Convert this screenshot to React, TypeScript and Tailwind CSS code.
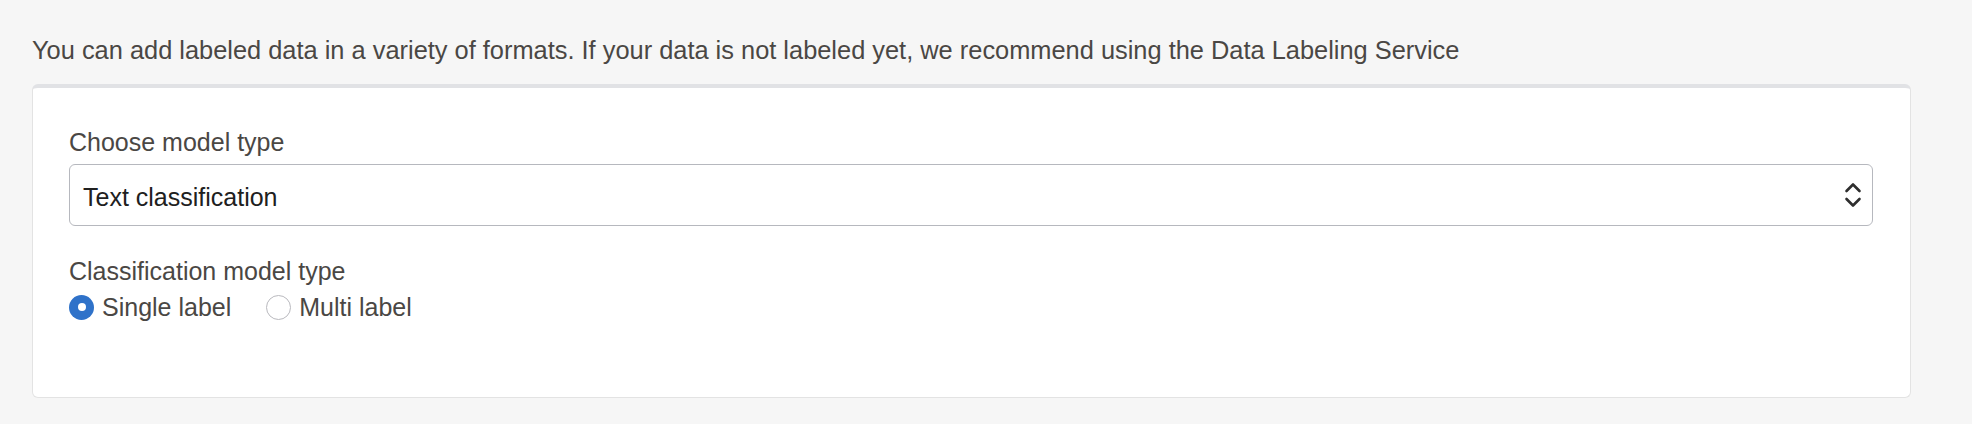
import React from "react";

function Chevrons() {
  return (
    <svg width="18" height="30" viewBox="0 0 18 30" fill="none" className="block">
      <path d="M2.5 11 L9 4.5 L15.5 11" stroke="#2e2e2e" strokeWidth="2.6" strokeLinecap="round" strokeLinejoin="round" />
      <path d="M2.5 19 L9 25.5 L15.5 19" stroke="#2e2e2e" strokeWidth="2.6" strokeLinecap="round" strokeLinejoin="round" />
    </svg>
  );
}

export default function App() {
  return (
    <div
      className="w-[1972px] h-[424px] bg-[#f6f6f6] pl-[32px] pr-[61px] pt-[35px] text-[25px] text-[#4a4744]"
      style={{ fontFamily: '"Liberation Sans", Arial, Helvetica, sans-serif' }}
    >
      <div className="leading-[30px] whitespace-nowrap text-[25.4px]">
        You can add labeled data in a variety of formats. If your data is not labeled yet, we recommend using the Data Labeling Service
      </div>
      <div className="mt-[19px] h-[314px] bg-white border border-[#e3e3e3] border-t-[4px] border-t-[#e1e2e5] rounded-[6px] pl-[36px] pr-[37px] pt-[39px]">
        <div className="leading-[30px]">Choose model type</div>
        <div className="mt-[7px] h-[62px] border border-[#b6b8be] rounded-[6px] flex items-center justify-between pl-[13px] pr-[10px]">
          <span className="leading-[30px] text-[#202020] pt-[3px]">Text classification</span>
          <Chevrons />
        </div>
        <div className="mt-[30px] leading-[30px]">Classification model type</div>
        <div className="mt-[6px] flex items-center leading-[30px]">
          <div className="flex items-center">
            <span className="w-[25px] h-[25px] rounded-full bg-[#2f72c9] flex items-center justify-center">
              <span className="w-[8px] h-[8px] rounded-full bg-white" />
            </span>
            <span className="ml-[8px]">Single label</span>
          </div>
          <div className="flex items-center ml-[35px]">
            <span className="w-[25px] h-[25px] rounded-full bg-white border border-[#b9b9be]" />
            <span className="ml-[8px]">Multi label</span>
          </div>
        </div>
      </div>
    </div>
  );
}
